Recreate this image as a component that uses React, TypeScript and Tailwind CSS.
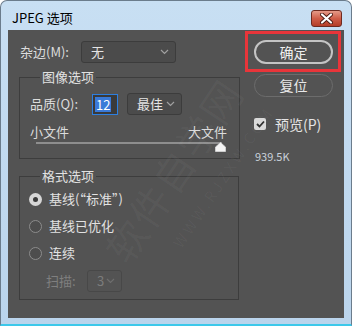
import React from "react";

const FONT = "font-['Noto_Sans_CJK_SC','Microsoft_YaHei',sans-serif]";

function Chevron({ color = "#9a9a9a" }: { color?: string }) {
  return (
    <svg width="9" height="6" viewBox="0 0 9 6" className="shrink-0">
      <path d="M1 1 L4.5 4.5 L8 1" fill="none" stroke={color} strokeWidth="1.2" />
    </svg>
  );
}

function Select({ label, w, dim = false }: { label: string; w: string; dim?: boolean }) {
  return (
    <div
      className={`${w} h-[22px] flex items-center justify-between pl-[9px] pr-[6px] rounded-[3px] border ${
        dim ? "border-[#484848] text-[#7c7c7c]" : "border-[#3c3c3c] bg-[#4b4b4b] text-[#e4e4e4]"
      }`}
    >
      <span className="text-[13px] leading-[16px]">{label}</span>
      <Chevron color={dim ? "#6e6e6e" : "#a0a0a0"} />
    </div>
  );
}

function Radio({ checked, label }: { checked?: boolean; label: string }) {
  return (
    <div className="h-[16px] flex items-center pl-[9px]">
      {checked ? (
        <div className="w-[13px] h-[13px] rounded-full bg-[#d6d6d6] flex items-center justify-center">
          <div className="w-[5px] h-[5px] rounded-full bg-[#3a3a3a]" />
        </div>
      ) : (
        <div className="w-[13px] h-[13px] rounded-full border border-[#8c8c8c] bg-[#4d4d4d]" />
      )}
      <span className="ml-[7px] text-[13px] leading-[16px] text-[#e2e2e2]">{label}</span>
    </div>
  );
}

export default function App() {
  return (
    <div className={`w-[352px] h-[326px] relative overflow-hidden bg-white ${FONT}`}>
      <div className="h-full flex flex-col rounded-t-[7px] border-x border-t border-[#6b7c8c] border-b-2 border-b-[#3cc8ea] bg-gradient-to-b from-[#c8dff3] to-[#bad4ec]">
        {/* title bar */}
        <div className="h-[29px] flex items-start pl-[11px] pr-[9px]">
          <span className="mt-[9px] text-[13px] leading-[16px] text-black">JPEG 选项</span>
          <div className="ml-auto mt-[9px] w-[31px] h-[17px] rounded-[3px] border border-[#6e2a20] bg-gradient-to-b from-[#e49a88] via-[#cf5d48] to-[#b43d27] flex items-center justify-center">
            <svg width="13" height="11" viewBox="0 0 13 11">
              <path d="M2 1.5 L11 9.5 M11 1.5 L2 9.5" stroke="#4b1a12" strokeWidth="4" strokeLinecap="round" />
              <path d="M2 1.5 L11 9.5 M11 1.5 L2 9.5" stroke="#ffffff" strokeWidth="2.2" strokeLinecap="round" />
            </svg>
          </div>
        </div>

        {/* dialog body */}
        <div className="mx-[7px] h-[288px] bg-[#535353] flex">
          {/* left column */}
          <div className="w-[232px] pl-[11px] pt-[11px]">
            <div className="h-[22px] flex items-center">
              <span className="w-[62px] pl-[1px] text-[13px] leading-[16px] text-[#dcdcdc]">杂边(M):</span>
              <Select label="无" w="w-[95px]" />
            </div>

            {/* 图像选项 */}
            <div className="relative mt-[14px] w-[221px] h-[82px] border border-[#3d3d3d]">
              <span className="absolute left-[20px] top-[-9px] px-[2px] bg-[#535353] text-[13px] leading-[16px] text-[#e2e2e2]">
                图像选项
              </span>
              <div className="mt-[15px] pl-[10px] h-[22px] flex items-center">
                <span className="w-[62px] text-[13px] leading-[16px] text-[#dcdcdc]">品质(Q):</span>
                <div className="w-[26px] h-[21px] border border-[#2d7fe0] bg-[#3a3a3a] flex items-center pl-[2px]">
                  <span className="bg-[#3a7ad8] text-white text-[13px] leading-[15px] px-[1px]">12</span>
                </div>
                <div className="ml-[9px]">
                  <Select label="最佳" w="w-[55px]" />
                </div>
              </div>
              <div className="mt-[9px] pl-[10px] pr-[12px] flex justify-between text-[13px] leading-[16px] text-[#dcdcdc]">
                <span>小文件</span>
                <span>大文件</span>
              </div>
              <div className="relative ml-[16px] w-[186px] h-[10px]">
                <div className="mt-[2px] h-[2px] bg-[#8e8e8e]" />
                <svg className="absolute right-[-4px] top-0" width="11" height="10" viewBox="0 0 11 10">
                  <path d="M5.5 0.5 L10.5 5 L10.5 9.5 L0.5 9.5 L0.5 5 Z" fill="#f4f4f4" stroke="#d8d8d8" strokeWidth="0.8" strokeLinejoin="round" />
                </svg>
              </div>
            </div>

            {/* 格式选项 */}
            <div className="relative mt-[17px] w-[220px] h-[124px] border border-[#3d3d3d]">
              <span className="absolute left-[20px] top-[-9px] px-[2px] bg-[#535353] text-[13px] leading-[16px] text-[#e2e2e2]">
                格式选项
              </span>
              <div className="mt-[14px] flex flex-col gap-[11px]">
                <Radio checked label={"基线(\u201C标准\u201D)"} />
                <Radio label="基线已优化" />
                <Radio label="连续" />
              </div>
              <div className="mt-[9px] pl-[26px] h-[22px] flex items-center">
                <span className="w-[41px] text-[13px] leading-[16px] text-[#7f7f7f]">扫描:</span>
                <Select label="3" w="w-[35px]" dim />
              </div>
            </div>
          </div>

          {/* right column */}
          <div className="ml-[14px] w-[79px] pt-[10px]">
            <div className="h-[24px] rounded-full border-2 border-[#c4c4c4] flex items-center justify-center text-[14px] text-[#f0f0f0]">
              确定
            </div>
            <div className="mt-[10px] h-[23px] rounded-full border-[1.5px] border-[#6c6c6c] flex items-center justify-center text-[14px] text-[#e8e8e8]">
              复位
            </div>
            <div className="mt-[21px] h-[12px] flex items-center">
              <div className="w-[12px] h-[12px] rounded-[2px] bg-[#d9d9d9] flex items-center justify-center">
                <svg width="9" height="8" viewBox="0 0 9 8">
                  <path d="M1 4 L3.5 6.5 L8 1.5" fill="none" stroke="#2e2e2e" strokeWidth="1.8" />
                </svg>
              </div>
              <span className="ml-[9px] text-[14px] leading-[16px] text-[#e4e4e4]">预览(P)</span>
            </div>
            <div className="mt-[19px] ml-[1px] text-[11px] leading-[14px] text-[#c9d1da]">939.5K</div>
          </div>
        </div>
      </div>

      {/* watermark */}
      <div className="absolute left-[68px] top-[148px] -rotate-[56deg] origin-center text-[40px] leading-[44px] text-white/[0.04] whitespace-nowrap pointer-events-none tracking-[2px]">
        软件自学网
      </div>
      <div className="absolute left-[140px] top-[168px] -rotate-[56deg] origin-center text-[15px] leading-[18px] text-white/[0.04] whitespace-nowrap pointer-events-none tracking-[3px]">
        WWW.RJZXW.COM
      </div>

      {/* red annotation */}
      <div className="absolute left-[245px] top-[31px] w-[96px] h-[41px] border-[3px] border-[#e8353a] pointer-events-none" />
    </div>
  );
}
